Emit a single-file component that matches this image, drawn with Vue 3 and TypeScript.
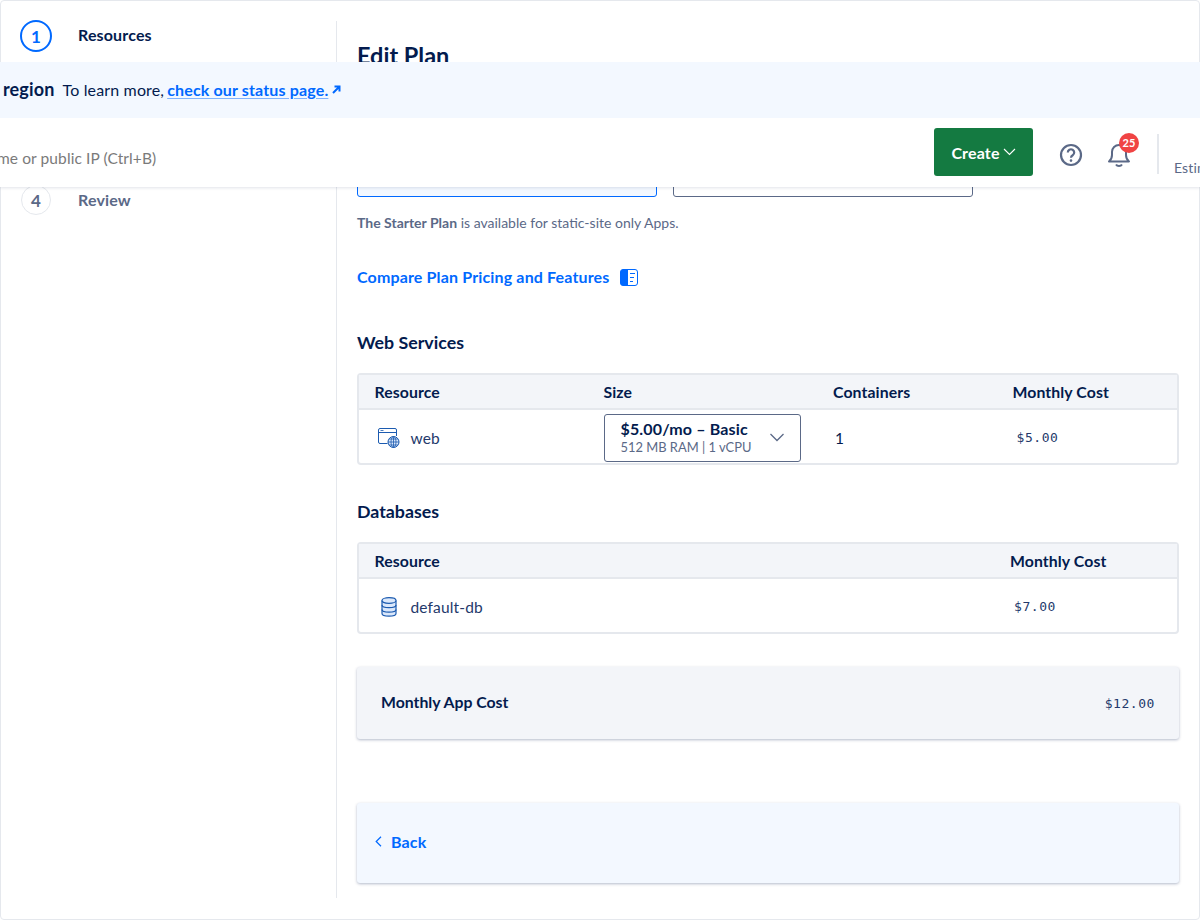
<template>
  <div class="page">
    <div class="frame">
      <aside class="steps">
        <div
          v-for="step in steps"
          :key="step.num"
          class="step"
          :class="{ active: step.num === 1 }"
        >
          <span class="step-num">{{ step.num }}</span>
          <span class="step-label">{{ step.label }}</span>
        </div>
      </aside>

      <main class="content">
        <h1>Edit Plan</h1>
        <div class="plans">
          <div class="plan selected"></div>
          <div class="plan"></div>
        </div>
        <p class="note"><b>The Starter Plan</b> is available for static-site only Apps.</p>
        <a class="compare">
          Compare Plan Pricing and Features
          <svg width="18" height="17" viewBox="0 0 18 17">
            <rect x="0.5" y="0.5" width="17" height="16" rx="2.5" fill="#fff" stroke="#0069ff" />
            <path d="M3 0.5h5v16H3a2.5 2.5 0 0 1-2.5-2.5V3A2.5 2.5 0 0 1 3 .5z" fill="#0069ff" />
            <path d="M10 4.500h5M10 8.500h4M10 12.500h3" stroke="#0069ff" stroke-width="1.200" fill="none" />
          </svg>
        </a>

        <h2>Web Services</h2>
        <div class="table">
          <div class="row head web-cols">
            <span>Resource</span>
            <span>Size</span>
            <span>Containers</span>
            <span>Monthly Cost</span>
          </div>
          <div class="row body web-cols">
            <span class="res">
              <svg width="24" height="22" viewBox="0 0 24 22" fill="none" stroke="#1c5bb0" stroke-width="1">
                <path d="M10.5 16.5H3a1.5 1.5 0 0 1-1.5-1.500V3A1.500 1.500 0 0 1 3 1.500h15A1.500 1.500 0 0 1 19.500 3v6" />
                <path d="M1.500 5.500h18" />
                <path d="M3.500 3.500h3" stroke-width="0.8" />
                <circle cx="16.500" cy="15" r="5.500" fill="#dbe8fb" />
                <path d="M11 15h11M16.500 9.500v11M12 12h9M12 18h9" stroke-width="0.8" />
                <ellipse cx="16.500" cy="15" rx="2.500" ry="5.500" stroke-width="0.8" />
              </svg>
              web
            </span>
            <div class="select">
              <div>
                <div class="sel-title">$5.00/mo – Basic</div>
                <div class="sel-sub">512 MB RAM | 1 vCPU</div>
              </div>
              <svg width="16" height="9" viewBox="0 0 16 9" fill="none" stroke="#5b6987" stroke-width="1.300">
                <path d="M1.500 1l6.500 6.500L14.500 1" />
              </svg>
            </div>
            <span class="count">1</span>
            <span class="mono cost">$5.00</span>
          </div>
        </div>

        <h2 class="db-title">Databases</h2>
        <div class="table">
          <div class="row head db-cols">
            <span>Resource</span>
            <span>Monthly Cost</span>
          </div>
          <div class="row body db-cols">
            <span class="res">
              <svg width="24" height="22" viewBox="0 0 24 22" fill="#dbe8fb" stroke="#1c5bb0" stroke-width="1.200">
                <path d="M5 4.500v13c0 1.500 3 2.700 7 2.700s7-1.200 7-2.700v-13" />
                <ellipse cx="12" cy="4.500" rx="7" ry="2.800" />
                <path d="M5 9c0 1.500 3 2.700 7 2.700S19 10.500 19 9M5 13.500c0 1.500 3 2.700 7 2.700s7-1.200 7-2.700" fill="none" />
              </svg>
              default-db
            </span>
            <span class="mono cost">$7.00</span>
          </div>
        </div>

        <div class="total">
          <span>Monthly App Cost</span>
          <span class="mono">$12.00</span>
        </div>

        <div class="back-bar">
          <a class="back">
            <svg width="7" height="11" viewBox="0 0 7 11" fill="none" stroke="#0069ff" stroke-width="1.200">
              <path d="M6 0.800L1.200 5.500 6 10.200" />
            </svg>
            Back
          </a>
        </div>
      </main>
    </div>

    <div class="banner">
      <b>region</b>
      <span>To learn more,</span>
      <a>check our status page.</a>
      <svg width="9" height="9" viewBox="0 0 9 9" fill="none" stroke="#0069ff" stroke-width="2">
        <path d="M1 8L7 2M2.500 1.500h5v5" />
      </svg>
    </div>

    <header class="topbar">
      <span class="search">me or public IP (Ctrl+B)</span>
      <button class="create">
        Create
        <svg width="13" height="8" viewBox="0 0 13 8" fill="none" stroke="#fff" stroke-width="1.100">
          <path d="M1 1l5.500 5.500L12 1" />
        </svg>
      </button>
      <svg class="help" width="24" height="24" viewBox="0 0 24 24" fill="none" stroke="#5b6987" stroke-width="2.200">
        <circle cx="12" cy="12" r="10" />
        <path d="M8.800 9.500a3.200 3.200 0 1 1 4.900 2.700c-1.100.7-1.700 1.300-1.700 2.500" />
        <circle cx="12" cy="17.600" r="1.300" fill="#5b6987" stroke="none" />
      </svg>
      <div class="bell">
        <svg width="24" height="26" viewBox="0 0 24 26" fill="none" stroke="#5b6987" stroke-width="2">
          <path d="M2 19.500c2-1.600 3-3.400 3-6.500V10a7 7 0 0 1 14 0v3c0 3.100 1 4.900 3 6.500z" stroke-linejoin="round" />
          <path d="M9 22.500c.6 1 1.700 1.500 3 1.500s2.400-.5 3-1.500" />
        </svg>
        <span class="badge">25</span>
      </div>
      <div class="divider"></div>
      <span class="estimate">Estimated costs</span>
    </header>
  </div>
</template>

<script setup lang="ts">
// steps 2 and 3 sit under the sticky bars in this view
const steps = [
  { num: 1, label: "Resources" },
  { num: 4, label: "Review" },
];
</script>

<style>
html,
body {
  margin: 0;
  background: #fff;
}
</style>

<style scoped>
.page {
  position: relative;
  width: 1200px;
  height: 920px;
  overflow: hidden;
  font-family: "Lato", "Open Sans", sans-serif;
  letter-spacing: 0.15px;
  color: #031b4e;
}

.frame {
  box-sizing: border-box;
  height: 920px;
  padding: 20px 0 21px;
  display: flex;
  border: 1px solid #e5e8ed;
  border-radius: 4px;
}

.steps {
  width: 336px;
  box-sizing: border-box;
  padding-left: 19px;
  border-right: 1px solid #e5e8ed;
  display: flex;
  flex-direction: column;
  gap: 133px;
}

.step {
  display: flex;
  align-items: center;
  height: 32px;
  margin-top: -1px;
  color: #5b6987;
  font-size: 16px;
  font-weight: 700;
}

.step.active {
  color: #031b4e;
}

.step-num {
  box-sizing: border-box;
  width: 30px;
  height: 30px;
  margin: 1px;
  border: 1px solid #e5e8ed;
  border-radius: 50%;
  display: flex;
  align-items: center;
  justify-content: center;
  font-size: 17px;
}

.step.active .step-num {
  width: 32px;
  height: 32px;
  margin: 0;
  border: 2px solid #0069ff;
  color: #0069ff;
}

.step-label {
  margin-left: 26px;
  margin-bottom: 1px;
}

.step.active .step-label {
  margin-bottom: 3px;
}

.content {
  flex: 1;
  padding: 0 20px;
  min-width: 0;
}

h1 {
  margin: 21px 0 0;
  font-size: 23.500px;
  line-height: 26px;
  letter-spacing: 0;
  font-weight: 700;
}

.plans {
  display: flex;
  gap: 16px;
  margin-top: 24px;
}

.plan {
  box-sizing: border-box;
  width: 300px;
  height: 105px;
  border: 1px solid #5b6987;
  border-radius: 3px;
}

.plan.selected {
  background: #f3f8ff;
  border-color: #0069ff;
}

.note {
  margin: 17px 0 0;
  font-size: 14px;
  line-height: 18px;
  letter-spacing: 0;
  color: #5b6987;
}

.compare {
  display: flex;
  align-items: center;
  gap: 11px;
  margin-top: 35px;
  color: #0069ff;
  font-size: 16px;
  font-weight: 700;
  line-height: 20px;
}

h2 {
  margin: 45px 0 0;
  font-size: 17.800px;
  line-height: 20px;
  letter-spacing: 0;
  font-weight: 700;
}

.db-title {
  margin-top: 36px;
}

.table {
  margin-top: 21px;
  border: 2px solid #e5e8ed;
  border-radius: 4px;
}

.row {
  display: grid;
  align-items: center;
  padding-left: 15.500px;
}

.web-cols {
  grid-template-columns: 229px 229.5px 179.500px 1fr;
}

.db-cols {
  grid-template-columns: 635.500px 1fr;
}

.head {
  height: 33px;
  background: #f3f5f9;
  border-bottom: 2px solid #e5e8ed;
  font-size: 15.800px;
  letter-spacing: 0.1px;
  font-weight: 700;
}

.body {
  height: 51px;
  padding-top: 2px;
  font-size: 15.500px;
}

.res {
  display: flex;
  align-items: center;
  gap: 10px;
  margin-left: 2px;
  color: #24396b;
}

.select {
  box-sizing: border-box;
  width: 197px;
  height: 48px;
  padding: 0 15px 0 16px;
  border: 1px solid #5b6987;
  border-radius: 3px;
  display: flex;
  align-items: center;
  justify-content: space-between;
}

.sel-title {
  font-size: 16px;
  font-weight: 700;
  line-height: 18px;
}

.sel-sub {
  margin-top: 1px;
  font-size: 12.900px;
  line-height: 17px;
  letter-spacing: 0;
  color: #5b6987;
}

.count {
  margin-left: 2px;
}

.mono {
  font-family: "DejaVu Sans Mono", monospace;
  font-size: 13px;
  letter-spacing: 0.55px;
  color: #24396b;
}

.cost {
  margin-left: 4px;
}

.total {
  box-sizing: border-box;
  height: 72px;
  margin-top: 33px;
  padding: 0 24px;
  display: flex;
  align-items: center;
  justify-content: space-between;
  background: #f3f5f9;
  border-radius: 3px;
  box-shadow: 0 1px 3px rgba(3, 27, 78, 0.3);
  font-size: 15.800px;
  letter-spacing: 0;
  font-weight: 700;
}

.total > span:first-child {
  margin-bottom: 3px;
}

.total .mono {
  font-weight: 400;
}

.back-bar {
  box-sizing: border-box;
  height: 80px;
  margin-top: 64px;
  padding: 0 0 3px 18px;
  display: flex;
  align-items: center;
  background: #f3f8ff;
  border-radius: 3px;
  box-shadow: 0 1px 3px rgba(3, 27, 78, 0.3);
}

.back {
  display: flex;
  align-items: center;
  gap: 9px;
  color: #0069ff;
  font-size: 16px;
  font-weight: 700;
}

.banner {
  position: absolute;
  z-index: 2;
  top: 62px;
  left: 0;
  right: 0;
  box-sizing: border-box;
  height: 56px;
  padding: 0 0 2px 3px;
  display: flex;
  align-items: center;
  background: #f3f8ff;
  font-size: 16px;
  white-space: nowrap;
}

.banner b {
  font-size: 18px;
  margin-right: 8px;
}

.banner a {
  margin-left: 3px;
  color: #0069ff;
  font-weight: 700;
  text-decoration: underline;
  text-decoration-color: #7fb3ff;
  text-underline-offset: 2px;
}

.banner svg {
  margin-left: 4px;
}

.topbar {
  position: absolute;
  z-index: 1;
  top: 118px;
  left: 0;
  right: 0;
  height: 69px;
  display: flex;
  align-items: center;
  background: #fff;
  box-shadow: 0 1px 3px rgba(3, 27, 78, 0.12);
  white-space: nowrap;
}

.search {
  flex: none;
  margin-left: -3px;
  margin-top: 10px;
  width: 937px;
  font-size: 15.500px;
  letter-spacing: 0.1px;
  color: #7a7a7a;
}

.create {
  flex: none;
  box-sizing: border-box;
  width: 99px;
  height: 48px;
  margin-top: -1px;
  border: none;
  border-radius: 3px;
  background: #147a41;
  color: #fff;
  font-family: inherit;
  font-size: 16px;
  letter-spacing: inherit;
  font-weight: 700;
  display: flex;
  align-items: center;
  justify-content: center;
  gap: 3px;
}

.help {
  flex: none;
  margin-left: 26px;
  margin-top: 4px;
}

.bell {
  position: relative;
  flex: none;
  margin-left: 24px;
  margin-top: 4px;
  height: 26px;
}

.badge {
  position: absolute;
  top: -9px;
  left: 12px;
  width: 20px;
  height: 20px;
  border-radius: 50%;
  background: #f04444;
  color: #fff;
  font-size: 11px;
  font-weight: 700;
  display: flex;
  align-items: center;
  justify-content: center;
}

.divider {
  flex: none;
  width: 2px;
  height: 40px;
  margin-left: 26px;
  margin-top: 2px;
  background: #e5e8ed;
}

.estimate {
  flex: none;
  margin-left: 15px;
  margin-top: 30px;
  font-size: 14px;
  color: #5b6987;
}
</style>
